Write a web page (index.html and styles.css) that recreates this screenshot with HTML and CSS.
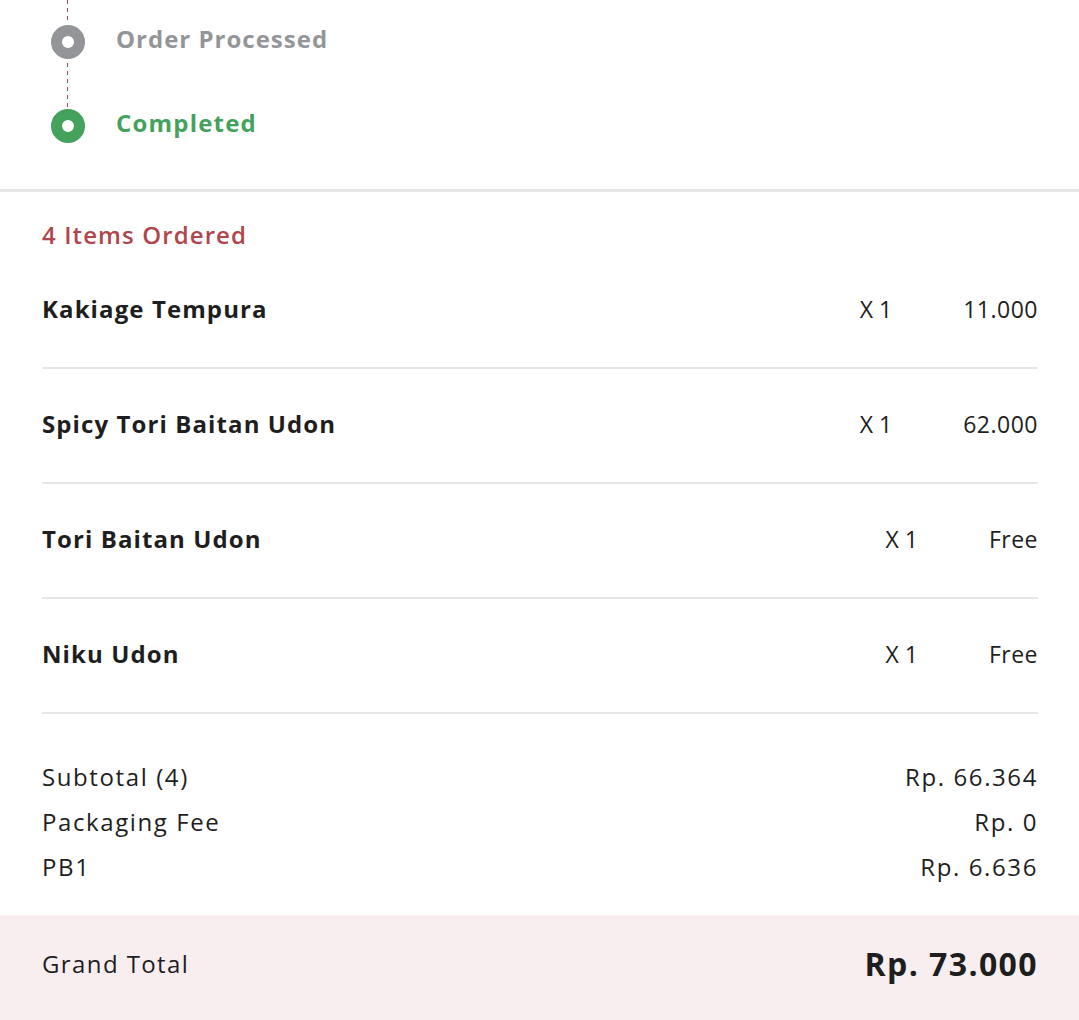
FILE: index.html
```html
<!DOCTYPE html>
<html lang="en">
<head>
  <meta charset="UTF-8">
  <meta name="viewport" content="width=device-width, initial-scale=1.0">
  <title>Order Detail</title>
  <link rel="stylesheet" href="styles.css">
</head>
<body>

  <div id="orderDetail">
    <div class="timeline">
      <div class="connector connector-top"></div>
      <div class="step step-done">
        <span class="dot"></span>
        <span class="step-label">Order Processed</span>
      </div>
      <div class="connector"></div>
      <div class="step step-current">
        <span class="dot"></span>
        <span class="step-label">Completed</span>
      </div>
    </div>

    <div class="items">
      <h2 class="items-title">4 Items Ordered</h2>

      <div class="item">
        <span class="item-name">Kakiage Tempura</span>
        <span class="item-qty">X 1</span>
        <span class="item-price">11.000</span>
      </div>
      <div class="item">
        <span class="item-name">Spicy Tori Baitan Udon</span>
        <span class="item-qty">X 1</span>
        <span class="item-price">62.000</span>
      </div>
      <div class="item">
        <span class="item-name">Tori Baitan Udon</span>
        <span class="item-qty">X 1</span>
        <span class="item-price">Free</span>
      </div>
      <div class="item">
        <span class="item-name">Niku Udon</span>
        <span class="item-qty">X 1</span>
        <span class="item-price">Free</span>
      </div>

      <div class="summary">
        <div class="summary-row"><span>Subtotal (4)</span><span>Rp. 66.364</span></div>
        <div class="summary-row"><span>Packaging Fee</span><span>Rp. 0</span></div>
        <div class="summary-row"><span>PB1</span><span>Rp. 6.636</span></div>
      </div>
    </div>

    <div class="grand-total">
      <span>Grand Total</span>
      <span class="grand-total-value">Rp. 73.000</span>
    </div>
  </div>

</body>
</html>
```

FILE: styles.css
```css
body {
  font-family: "Open Sans", Arial, sans-serif;
  margin: 0;
  padding: 0;
  background-color: #fff;
  color: #1e1e1e;
}

#orderDetail {
  width: 100%;
}

/* status timeline */
.timeline {
  display: flex;
  flex-direction: column;
  padding: 0 0 46px 51px;
  border-bottom: 3px solid #e6e6e6;
}

.connector {
  width: 1px;
  height: 44px;
  margin: 4px 0 2px 16px;
  background-image: repeating-linear-gradient(to bottom, #a04848 0 4px, transparent 4px 8px);
}

.connector-top {
  height: 24px;
  margin: 0 0 1px 16px;
}

.step {
  display: flex;
  align-items: center;
  height: 34px;
}

.dot {
  width: 12px;
  height: 12px;
  border: 11px solid #939598;
  border-radius: 50%;
  background-color: #fff;
}

.step-label {
  margin-left: 31px;
  margin-top: -7px;
  font-size: 24px;
  font-weight: 700;
  line-height: 34px;
  letter-spacing: 1px;
  color: #939598;
}

.step-current .dot {
  border-color: #45a25c;
}

.step-current .step-label {
  color: #45a25c;
  letter-spacing: 1.2px;
}

/* ordered items */
.items {
  padding: 0 41px 26px 42px;
}

.items-title {
  margin: 26px 0 2px;
  font-size: 24px;
  font-weight: 600;
  line-height: 34px;
  letter-spacing: 1.1px;
  color: #b0454d;
}

.item {
  display: flex;
  align-items: center;
  padding: 38px 0 41px;
  border-bottom: 2px solid #e6e6e6;
  font-size: 23px;
  line-height: 34px;
}

.item-name {
  flex: 1;
  font-weight: 700;
  font-size: 24px;
  letter-spacing: 1.1px;
}

.item-price {
  margin-left: 71px;
  letter-spacing: 0.5px;
}

.summary {
  padding-top: 40px;
}

.summary-row {
  display: flex;
  justify-content: space-between;
  font-size: 24px;
  line-height: 45px;
  letter-spacing: 1.6px;
}

/* grand total band */
.grand-total {
  display: flex;
  justify-content: space-between;
  align-items: center;
  padding: 27px 41px 40px 42px;
  background-color: #f8eef0;
  font-size: 24px;
  line-height: 44px;
  letter-spacing: 1.4px;
}

.grand-total-value {
  font-size: 32px;
  font-weight: 700;
  letter-spacing: 1.4px;
}
```
